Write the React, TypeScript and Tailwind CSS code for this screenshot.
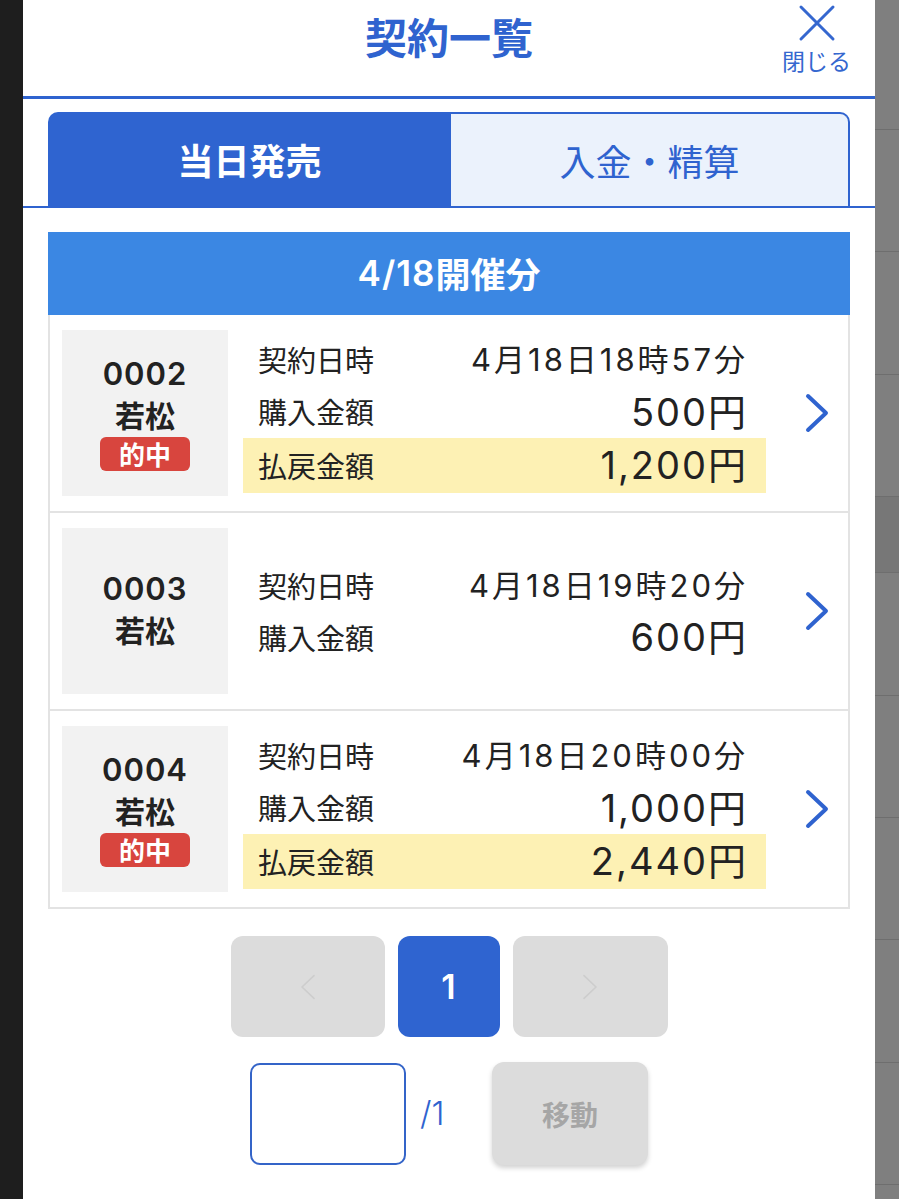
import React from "react"

type Contract = {
  no: string
  place: string
  hit: boolean
  date: string
  amount: string
  payout?: string
}

const contracts: Contract[] = [
  { no: "0002", place: "若松", hit: true, date: "4月18日18時57分", amount: "500円", payout: "1,200円" },
  { no: "0003", place: "若松", hit: false, date: "4月18日19時20分", amount: "600円" },
  { no: "0004", place: "若松", hit: true, date: "4月18日20時00分", amount: "1,000円", payout: "2,440円" },
]

const font = { fontFamily: '"Noto Sans CJK JP", "Noto Sans", sans-serif' }
// digits look wider in the shot, Inter gets closer than the CJK font
const num = "font-['Inter','Noto_Sans_CJK_JP',sans-serif]"

const Chevron = ({ dir = "right", className = "" }: { dir?: "left" | "right"; className?: string }) => (
  <svg viewBox="0 0 24 40" className={className} fill="none" stroke="currentColor" strokeLinecap="round" strokeLinejoin="round">
    {dir === "right" ? <path d="M3 3 L21 20 L3 37" /> : <path d="M21 3 L3 20 L21 37" />}
  </svg>
)

const ContractRow = ({ c }: { c: Contract }) => (
  <div className="flex items-center pl-[12px] pt-[15px] pb-[15px]">
    <div className="w-[166px] h-[166px] bg-[#f2f2f2] flex flex-col items-center justify-center text-[#222]">
      <span className={`${num} text-[31px] font-semibold leading-[36px] tracking-[1px]`}>{c.no}</span>
      <span className="text-[30px] font-bold leading-[44px]">{c.place}</span>
      {c.hit && (
        <span className="mt-[1px] w-[90px] h-[34px] rounded-[6px] bg-[#d8453e] text-white text-[26px] font-bold leading-[34px] text-center">
          的中
        </span>
      )}
    </div>
    <div className="ml-[15px] w-[523px] text-[#222]">
      <div className="h-[52px] flex items-center justify-between pl-[15px] pr-[18px]">
        <span className="text-[29px] leading-none">契約日時</span>
        <span className={`${num} text-[31px] leading-none tracking-[3px]`}>{c.date}</span>
      </div>
      <div className="h-[52px] flex items-center justify-between pl-[15px] pr-[18px]">
        <span className="text-[29px] leading-none">購入金額</span>
        <span className={`${num} text-[38px] leading-none tracking-[2px]`}>{c.amount}</span>
      </div>
      {c.payout && (
        <div className="h-[55px] flex items-center justify-between pl-[15px] pr-[18px] bg-[#fdf1b4]">
          <span className="text-[29px] leading-none">払戻金額</span>
          <span className={`${num} text-[38px] leading-none tracking-[2px]`}>{c.payout}</span>
        </div>
      )}
    </div>
    <Chevron className="ml-[39px] w-[24px] h-[40px] text-[#2f63cf] [stroke-width:4]" />
  </div>
)

const stripRows = [
  { h: "h-[130px]", bg: "" },
  { h: "h-[122px]", bg: "" },
  { h: "h-[123px]", bg: "" },
  { h: "h-[122px]", bg: "" },
  { h: "h-[76px]", bg: "bg-[#777777]" },
  { h: "h-[123px]", bg: "" },
  { h: "h-[122px]", bg: "" },
  { h: "h-[122px]", bg: "" },
  { h: "h-[123px]", bg: "" },
  { h: "h-[122px]", bg: "" },
]

export default function App() {
  return (
    <div className="flex w-[899px] h-[1199px] overflow-hidden bg-[#7f7f7f]" style={font}>
      <div className="w-[23px] shrink-0 bg-[#1e1e1e]" />

      <div className="w-[852px] shrink-0 bg-white flex flex-col">
        {/* header */}
        <header className="h-[96px] grid grid-cols-[1fr_auto_1fr]">
          <div />
          <h1 className="pt-[10px] text-[42px] font-bold leading-[52px] text-[#2f63cf]">契約一覧</h1>
          <button className="justify-self-end mr-[24px] pt-[3px] flex flex-col items-center text-[#3567cf]">
            <svg viewBox="0 0 40 40" className="w-[40px] h-[40px]" fill="none" stroke="currentColor" strokeWidth="3" strokeLinecap="round">
              <path d="M4 4 L36 36 M36 4 L4 36" />
            </svg>
            <span className="text-[23px] leading-[28px] mt-[3px]">閉じる</span>
          </button>
        </header>
        <div className="h-[3px] bg-[#2f63cf]" />

        {/* tabs */}
        <div className="px-[25px] pt-[13px] border-b-2 border-[#2f63cf]">
          <div className="flex h-[94px]">
            <div className="w-[403px] rounded-tl-[10px] bg-[#2f64d0] flex items-center justify-center text-white text-[36px] font-bold">
              当日発売
            </div>
            <div className="flex-1 rounded-tr-[10px] border-2 border-b-0 border-l-0 border-[#2f63cf] bg-[#ebf2fc] flex items-center justify-center text-[#2f63cf] text-[36px]">
              入金・精算
            </div>
          </div>
        </div>

        {/* list */}
        <div className="px-[25px] pt-[24px]">
          <div className="h-[83px] bg-[#3b87e3] flex items-center justify-center text-white text-[35px] font-bold">
            <span className={`${num} font-semibold tracking-[1px]`}>4/18</span>開催分
          </div>
          <div className="border-2 border-t-0 border-[#e3e3e3] divide-y-2 divide-[#e3e3e3]">
            {contracts.map((c) => (
              <ContractRow key={c.no} c={c} />
            ))}
          </div>
        </div>

        {/* pager */}
        <div className="mt-[27px] flex justify-center gap-[13px]">
          <button className="w-[154px] h-[101px] rounded-[12px] bg-[#dcdcdc] flex items-center justify-center">
            <Chevron dir="left" className="w-[16px] h-[34px] text-[#cdcdcd] [stroke-width:2.5]" />
          </button>
          <button className={`${num} w-[102px] h-[101px] rounded-[12px] bg-[#2f64d0] text-white text-[34px] font-semibold`}>1</button>
          <button className="w-[155px] h-[101px] rounded-[12px] bg-[#dcdcdc] flex items-center justify-center">
            <Chevron className="w-[16px] h-[34px] text-[#cdcdcd] [stroke-width:2.5]" />
          </button>
        </div>

        <div className="mt-[25px] flex items-center justify-center">
          <input className="w-[156px] h-[102px] rounded-[10px] border-2 border-[#3464c8] bg-white" />
          <span className={`${num} ml-[14px] w-[32px] text-[33px] leading-none text-[#2f63cf] font-light`}>/1</span>
          <button className="ml-[40px] w-[156px] h-[103px] rounded-[12px] bg-[#dcdcdc] shadow-[0_3px_5px_rgba(0,0,0,0.18)] text-[#a6a6a6] text-[28px] font-bold">
            移動
          </button>
        </div>
      </div>

      <div className="w-[24px] shrink-0 flex flex-col">
        {stripRows.map((r, i) => (
          <div key={i} className={`${r.h} ${r.bg} border-b border-[#6e6e6e]`} />
        ))}
      </div>
    </div>
  )
}
